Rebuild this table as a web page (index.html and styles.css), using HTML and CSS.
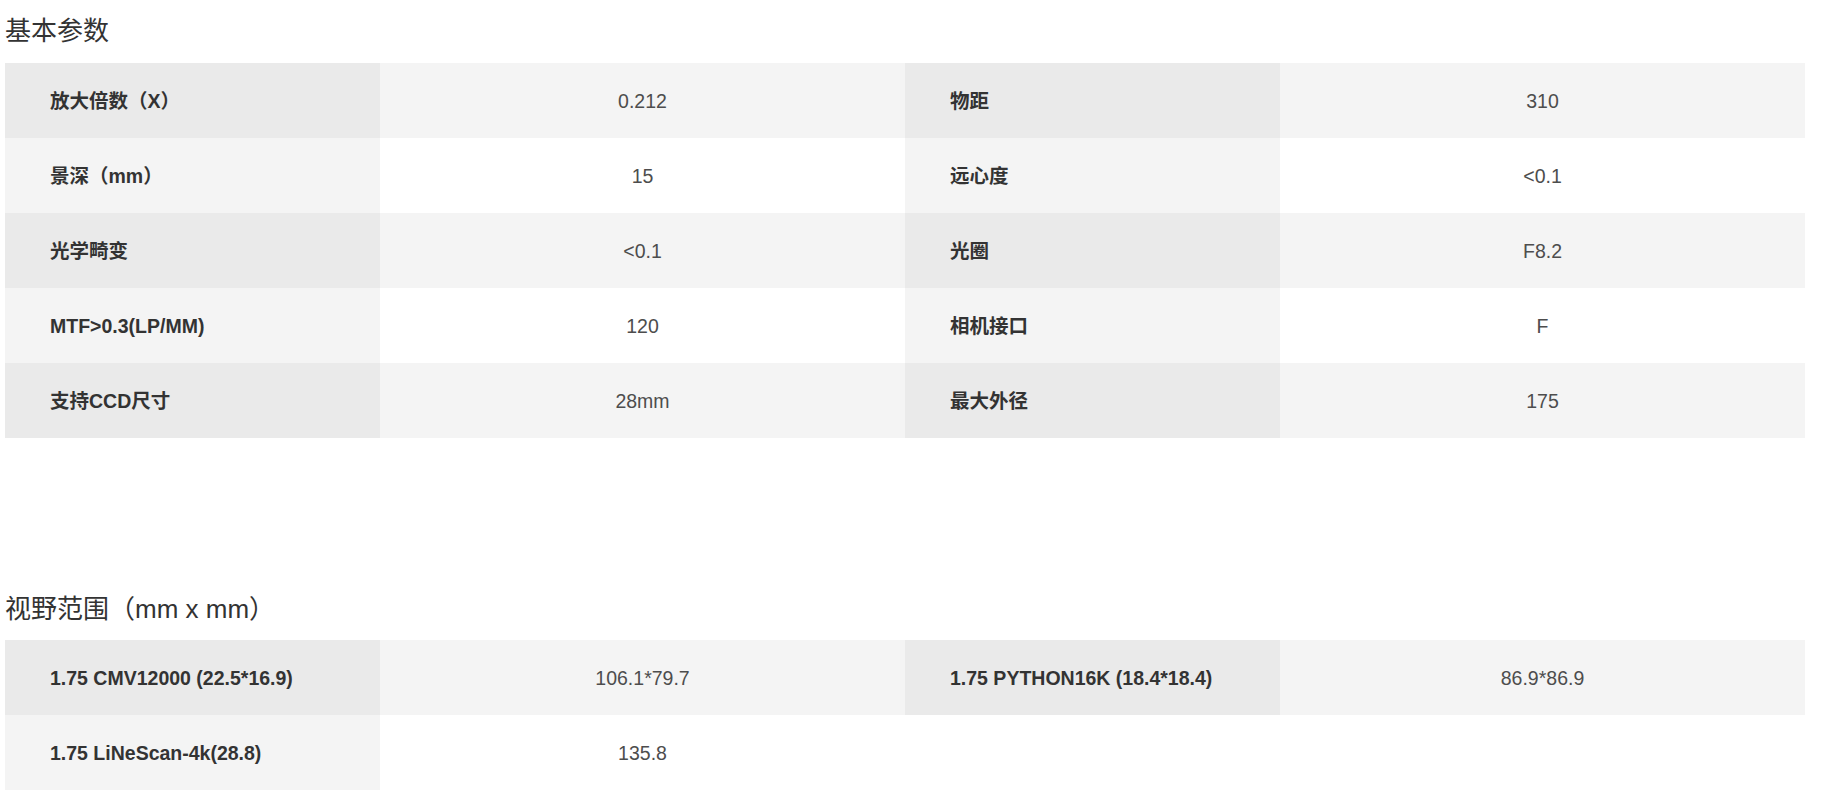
FILE: index.html
```html
<!DOCTYPE html>
<html lang="zh-CN">
<head>
<meta charset="utf-8">
<title>参数</title>
<link rel="stylesheet" href="styles.css">
</head>
<body>
<div class="page">
  <section class="block">
    <h2 class="block-title">基本参数</h2>
    <table class="spec">
      <colgroup><col class="c-label"><col class="c-value"><col class="c-label"><col class="c-value"></colgroup>
      <tbody>
        <tr><th>放大倍数（X）</th><td>0.212</td><th>物距</th><td>310</td></tr>
        <tr><th>景深（mm）</th><td>15</td><th>远心度</th><td>&lt;0.1</td></tr>
        <tr><th>光学畸变</th><td>&lt;0.1</td><th>光圈</th><td>F8.2</td></tr>
        <tr><th>MTF&gt;0.3(LP/MM)</th><td>120</td><th>相机接口</th><td>F</td></tr>
        <tr><th>支持CCD尺寸</th><td>28mm</td><th>最大外径</th><td>175</td></tr>
      </tbody>
    </table>
  </section>
  <section class="block block-second">
    <h2 class="block-title">视野范围（mm x mm）</h2>
    <table class="spec">
      <colgroup><col class="c-label"><col class="c-value"><col class="c-label"><col class="c-value"></colgroup>
      <tbody>
        <tr><th>1.75 CMV12000 (22.5*16.9)</th><td>106.1*79.7</td><th>1.75 PYTHON16K (18.4*18.4)</th><td>86.9*86.9</td></tr>
        <tr><th>1.75 LiNeScan-4k(28.8)</th><td>135.8</td></tr>
      </tbody>
    </table>
  </section>
</div>
</body>
</html>
```
FILE: styles.css
```css
html, body {
  margin: 0;
  padding: 0;
  background: #ffffff;
}

body {
  font-family: "Liberation Sans", Arial, "Noto Sans CJK SC", sans-serif;
  color: #333333;
}

.page {
  padding: 16px 0 0 5px;
}

.block-title {
  margin: 0 0 16px 0;
  font-size: 26px;
  line-height: 31px;
  font-weight: normal;
  color: #333333;
  font-family: "Liberation Sans", Arial, "Noto Sans CJK SC", sans-serif;
}

.block-second {
  margin-top: 156px;
}

.block-second .block-title {
  margin-bottom: 15px;
}

.spec {
  width: 1800px;
  border-collapse: collapse;
  border-spacing: 0;
  table-layout: fixed;
}

.c-label { width: 375px; }
.c-value { width: 525px; }

.spec th,
.spec td {
  height: 75px;
  padding: 0;
  font-size: 19.5px;
  line-height: 24px;
  vertical-align: middle;
  white-space: nowrap;
}

.spec th {
  text-align: left;
  padding-left: 45px;
  font-weight: bold;
  color: #333333;
}

.spec td {
  text-align: center;
  font-weight: normal;
  color: #4d4d4d;
}

.spec tr:nth-child(odd) th { background: #eaeaea; }
.spec tr:nth-child(odd) td { background: #f4f4f4; }
.spec tr:nth-child(even) th { background: #f4f4f4; }
.spec tr:nth-child(even) td { background: #ffffff; }
```
